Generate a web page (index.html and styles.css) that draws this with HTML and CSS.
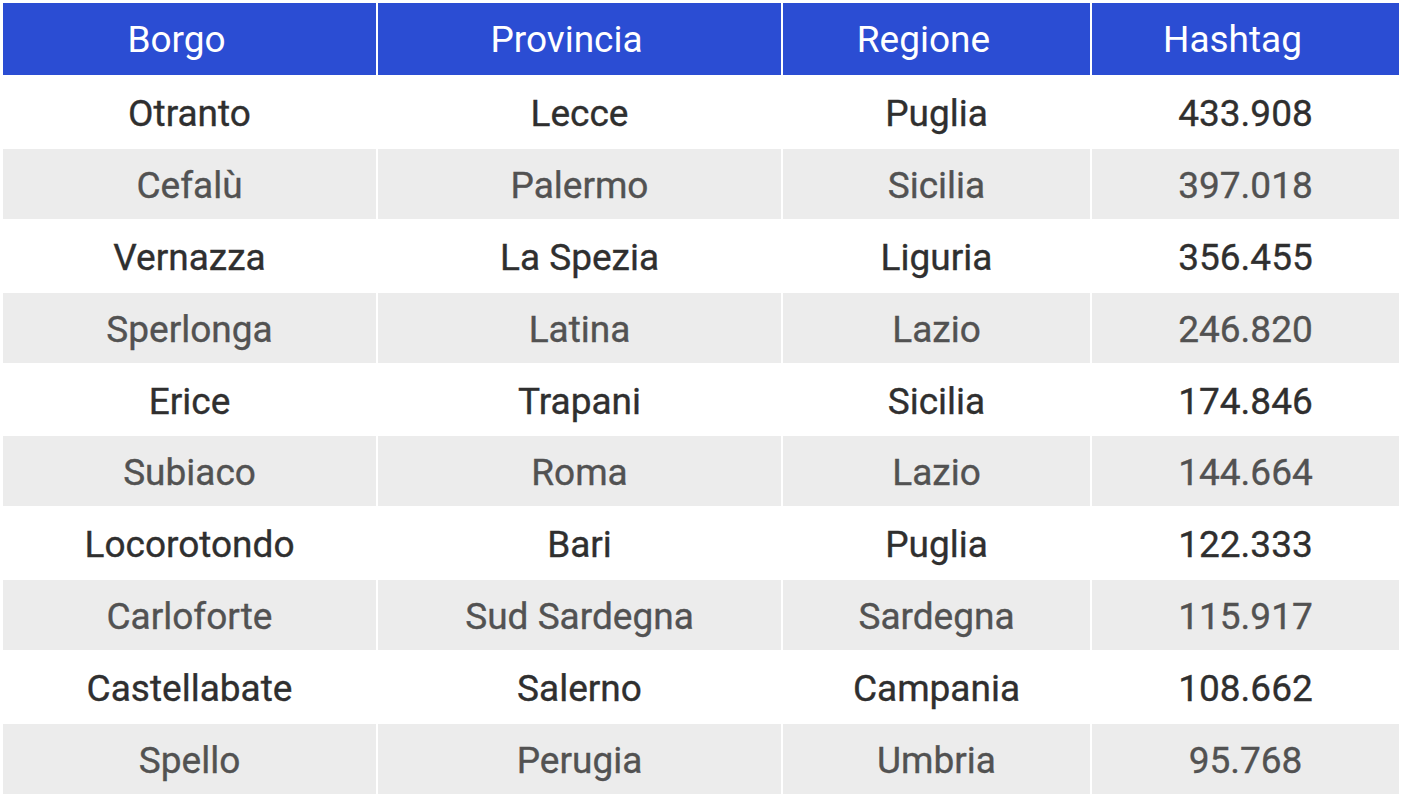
FILE: index.html
```html
<!DOCTYPE html>
<html lang="it">
<head>
<meta charset="utf-8">
<title>Borghi</title>
<link rel="stylesheet" href="styles.css">
</head>
<body>
<table class="tbl">
  <colgroup>
    <col class="c1"><col class="c2"><col class="c3"><col class="c4">
  </colgroup>
  <thead>
    <tr><th>Borgo</th><th>Provincia</th><th>Regione</th><th>Hashtag</th></tr>
  </thead>
  <tbody>
    <tr><td>Otranto</td><td>Lecce</td><td>Puglia</td><td>433.908</td></tr>
    <tr><td>Cefalù</td><td>Palermo</td><td>Sicilia</td><td>397.018</td></tr>
    <tr><td>Vernazza</td><td>La Spezia</td><td>Liguria</td><td>356.455</td></tr>
    <tr><td>Sperlonga</td><td>Latina</td><td>Lazio</td><td>246.820</td></tr>
    <tr><td>Erice</td><td>Trapani</td><td>Sicilia</td><td>174.846</td></tr>
    <tr><td>Subiaco</td><td>Roma</td><td>Lazio</td><td>144.664</td></tr>
    <tr><td>Locorotondo</td><td>Bari</td><td>Puglia</td><td>122.333</td></tr>
    <tr><td>Carloforte</td><td>Sud Sardegna</td><td>Sardegna</td><td>115.917</td></tr>
    <tr><td>Castellabate</td><td>Salerno</td><td>Campania</td><td>108.662</td></tr>
    <tr><td>Spello</td><td>Perugia</td><td>Umbria</td><td>95.768</td></tr>
  </tbody>
</table>
</body>
</html>
```
FILE: styles.css
```css
html, body {
  margin: 0;
  padding: 0;
  background: #ffffff;
}
body {
  font-family: Roboto, "Liberation Sans", sans-serif;
}
.tbl {
  border-collapse: separate;
  border-spacing: 2px;
  margin: 1px;
  table-layout: fixed;
  width: 1400px;
}
.c1 { width: 373px; }
.c2 { width: 403px; }
.c3 { width: 307px; }
.c4 { width: 307px; }
.tbl th,
.tbl td {
  padding: 0;
  text-align: center;
  vertical-align: middle;
  font-size: 37px;
  font-weight: 400;
  white-space: nowrap;
}
.tbl td {
  height: 69.9px;
  padding-top: 3px;
  box-sizing: border-box;
  -webkit-text-stroke: 0.35px currentColor;
}
.tbl th {
  height: 72px;
  background: #2b4dd3;
  color: #ffffff;
  padding-right: 26px;
}
.tbl tbody tr:nth-child(odd) td {
  background: #ffffff;
  color: #2f2f2f;
}
.tbl tbody tr:nth-child(even) td {
  background: #ececec;
  color: #525252;
}
```
